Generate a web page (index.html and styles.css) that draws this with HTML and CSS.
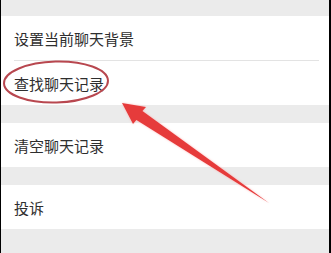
FILE: index.html
```html
<!DOCTYPE html>
<html lang="zh-CN">
<head>
<meta charset="UTF-8" />
<meta name="viewport" content="width=device-width, initial-scale=1" />
<title>聊天信息</title>
<link rel="stylesheet" href="styles.css">
</head>
<body>
<div class="frame">
    <div class="group first">
        <div class="row">设置当前聊天背景</div>
        <div class="divider"></div>
        <div class="row">查找聊天记录</div>
    </div>
    <div class="group">
        <div class="row">清空聊天记录</div>
    </div>
    <div class="group">
        <div class="row">投诉</div>
    </div>

    <!-- annotation drawn over the list -->
    <svg class="marks" width="328" height="253" viewBox="1 0 328 253">
        <defs>
            <filter id="glow" x="-10%" y="-10%" width="120%" height="120%">
                <feGaussianBlur in="SourceAlpha" stdDeviation="1.2" result="b" />
                <feFlood flood-color="#ff9a9a" flood-opacity="0.7" />
                <feComposite in2="b" operator="in" result="g" />
                <feMerge>
                    <feMergeNode in="g" />
                    <feMergeNode in="SourceGraphic" />
                </feMerge>
            </filter>
        </defs>
        <ellipse cx="56" cy="82" rx="52" ry="20.5" fill="none" stroke="#b8474f" stroke-width="2" transform="rotate(-1.5 56 82)" />
        <polygon filter="url(#glow)" fill="#e63a3a"
            points="122,103 146,107 142.5,111 269,203 136.4,120 133,124" />
    </svg>
</div>
</body>
</html>
```

FILE: styles.css
```css
body {
    margin: 0;
    background: #ebebeb;
    font-family: "Noto Sans CJK SC", "Noto Sans", sans-serif;
    color: #2e2e2e;
}

.frame {
    position: relative;
    width: 328px;
    height: 253px;
    overflow: hidden;
    background: #ebebeb;
    border-left: 1px solid #000;
    border-right: 2px solid #000;
}

.group {
    background: #fff;
    margin-top: 18px;
}

.group.first {
    margin-top: 16px;
}

.row {
    height: 44px;
    line-height: 46px;
    padding-left: 13px;
    font-size: 15px;
    white-space: nowrap;
}

.divider {
    height: 1px;
    margin: 0 10px 0 13px;
    background: #e3e3e3;
}

/* overlay with the red circle and arrow */
.marks {
    position: absolute;
    top: 0;
    left: 0;
    pointer-events: none;
}
```
